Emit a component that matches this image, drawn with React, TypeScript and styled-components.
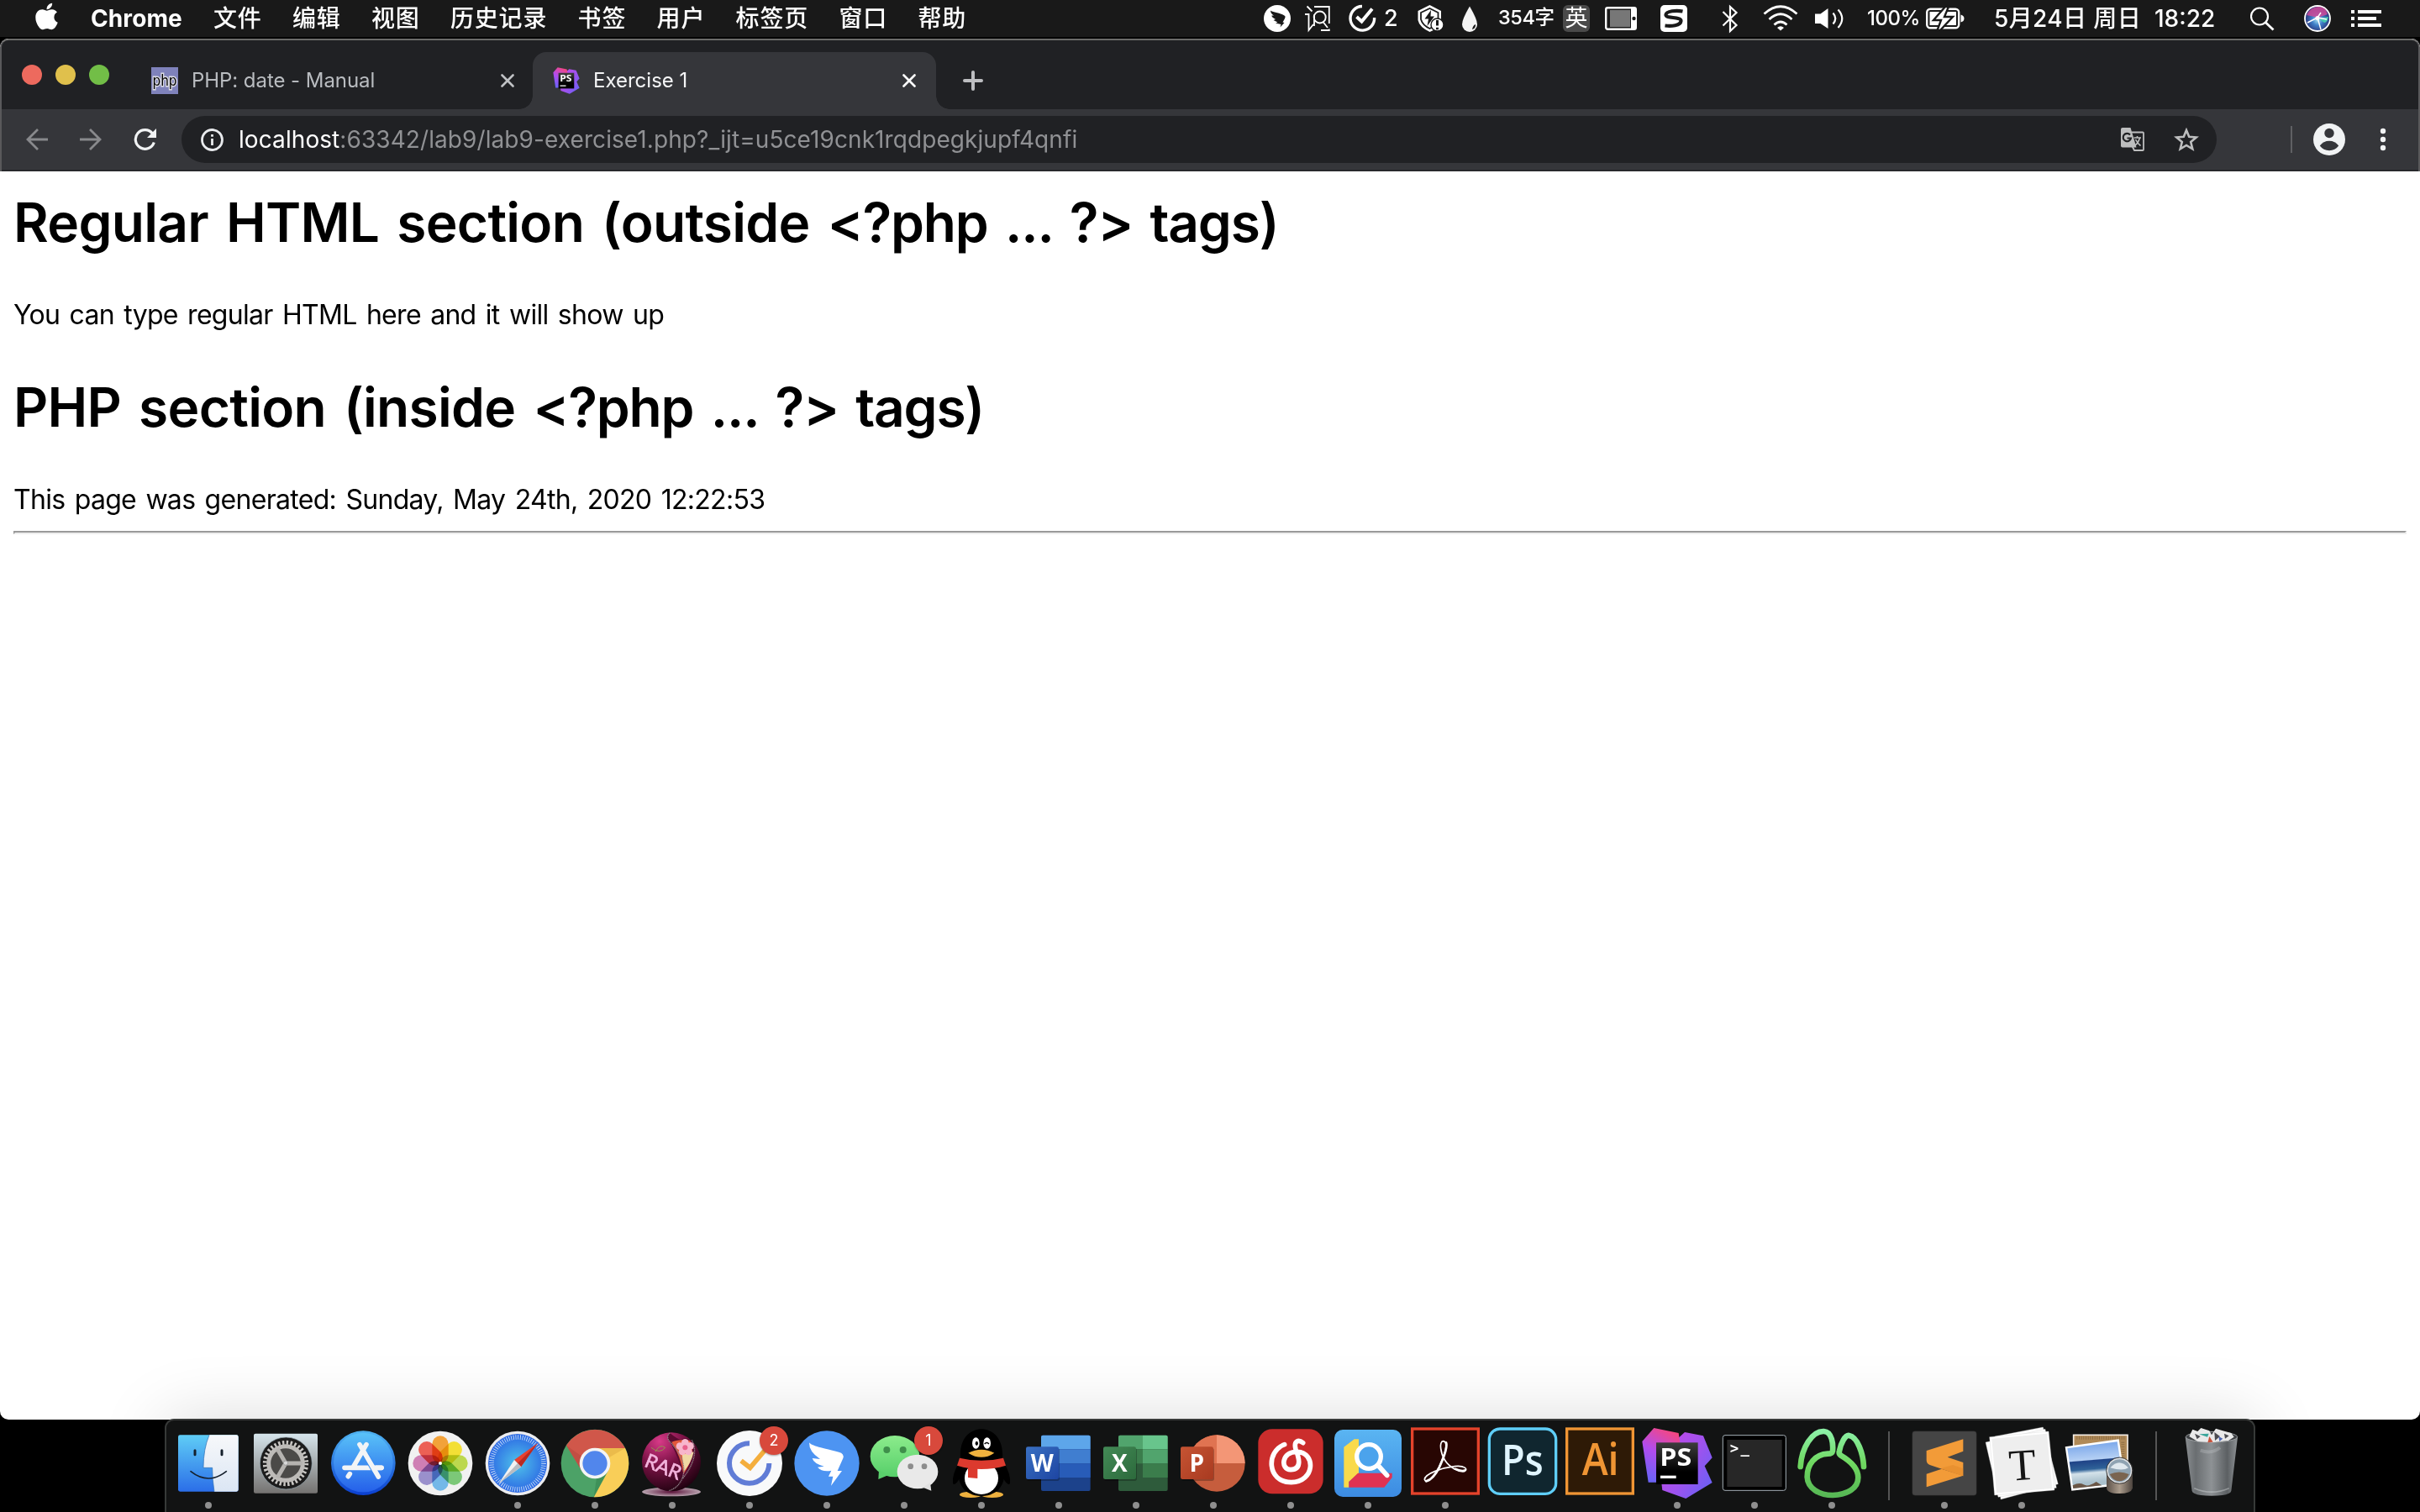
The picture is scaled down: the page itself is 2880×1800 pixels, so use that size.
import React from "react";
import styled, { createGlobalStyle, css } from "styled-components";
import { FaApple } from "react-icons/fa";

const uiFont = `Inter, "Noto Sans CJK SC", sans-serif`;

const GlobalStyle = createGlobalStyle`
  html, body { margin: 0; padding: 0; background: #000; }
  * { box-sizing: border-box; }
  svg { display: block; flex: none; }
`;

/* ---------- layout ---------- */

const Desktop = styled.div`
  display: flex;
  flex-direction: column;
  width: 2880px;
  height: 1800px;
  overflow: hidden;
  background: #000;
  font-family: ${uiFont};
`;

const MenuBar = styled.header`
  display: flex;
  flex: none;
  height: 44px;
  margin-bottom: 2px;
  padding: 0 46px 0 42px;
  background: #191919;
  color: #fff;
`;

const AppleMark = styled.div`
  width: 27px;
  margin-right: 39px;
  padding-top: 1px;
  font-size: 37px;
  svg { width: 27px; }
`;

const AppName = styled.strong`
  width: 146px;
  font-size: 28px;
  font-weight: 700;
  line-height: 44px;
  letter-spacing: 0.1px;
`;

const MenuList = styled.nav`
  display: flex;
  gap: 36.4px;
`;

const MenuItem = styled.span`
  font-size: 28px;
  font-weight: 500;
  line-height: 44px;
  letter-spacing: 0.8px;
  white-space: nowrap;
`;

const StatusArea = styled.div`
  display: flex;
  margin-left: auto;
`;

const StatusSlot = styled.div<{ $w: number; $gap: number }>`
  flex: none;
  width: ${(p) => p.$w}px;
  margin-left: ${(p) => p.$gap}px;
  height: 44px;
`;

const StatusText = styled(StatusSlot)<{ $size: number; $track?: number; $shift?: number }>`
  font-size: ${(p) => p.$size}px;
  font-weight: 500;
  line-height: ${(p) => 44 - (p.$shift ?? 0) * 2}px;
  letter-spacing: ${(p) => p.$track ?? 0}px;
  white-space: nowrap;
`;

const InputBadge = styled(StatusSlot)`
  height: 32px;
  margin-top: 6px;
  border-radius: 6px;
  background: #4a4a4a;
  font-size: 27px;
  line-height: 31px;
  text-align: center;
`;

const Window = styled.section`
  display: flex;
  flex: none;
  flex-direction: column;
  height: 1644px;
  border-radius: 10px;
  overflow: hidden;
  background: #fff;
`;

const BrowserChrome = styled.div`
  flex: none;
  height: 158px;
  border: 2px solid #59595b;
  border-top-color: #6a6a69;
  border-bottom: 0;
  border-radius: 10px 10px 0 0;
  background: #202124;
  overflow: hidden;
`;

const TabStrip = styled.div`
  display: flex;
  align-items: flex-end;
  height: 82px;
  padding-left: 24px;
`;

const TrafficLights = styled.div`
  display: flex;
  align-items: center;
  gap: 16px;
  height: 82px;
  margin-right: 20px;
`;

const Light = styled.span<{ $color: string }>`
  width: 24px;
  height: 24px;
  border-radius: 50%;
  background: ${(p) => p.$color};
`;

const flare = css`
  content: "";
  position: absolute;
  bottom: 0;
  width: 16px;
  height: 16px;
`;

const Tab = styled.div<{ $active?: boolean }>`
  position: relative;
  display: flex;
  align-items: center;
  gap: 16px;
  width: ${(p) => (p.$active ? 480 : 484)}px;
  height: 68px;
  padding: ${(p) => (p.$active ? "0 24px" : "0 22px 0 30px")};
  border-radius: 16px 16px 0 0;
  background: ${(p) => (p.$active ? "#35363a" : "transparent")};
  color: ${(p) => (p.$active ? "#f4f5f6" : "#b9bcc0")};
  ${(p) =>
    p.$active &&
    css`
      &::before {
        ${flare}
        left: -16px;
        background: radial-gradient(circle at 0 0, transparent 15.5px, #35363a 16px);
      }
      &::after {
        ${flare}
        right: -16px;
        background: radial-gradient(circle at 100% 0, transparent 15.5px, #35363a 16px);
      }
    `}
`;

const TabTitle = styled.span<{ $track: number }>`
  flex: 1;
  font-size: 24px;
  line-height: 66px;
  letter-spacing: ${(p) => p.$track}px;
  white-space: nowrap;
`;

const NewTab = styled.div`
  display: flex;
  align-items: center;
  height: 68px;
  margin-left: 32px;
`;

const Toolbar = styled.div`
  display: flex;
  align-items: center;
  height: 74px;
  padding-left: 29px;
  border-bottom: 2px solid #28292c;
  background: #35363a;
`;

const NavButtons = styled.div`
  display: flex;
  gap: 38px;
  margin-right: 30px;
`;

const Omnibox = styled.div`
  display: flex;
  align-items: center;
  width: 2422px;
  height: 56px;
  padding: 0 21px 0 23px;
  border-radius: 28px;
  background: #202124;
`;

const Url = styled.span`
  flex: 1;
  margin-left: 18px;
  color: #909194;
  font-size: 28px;
  line-height: 56px;
  letter-spacing: 0.08px;
  white-space: nowrap;
  b { color: #fff; font-weight: 400; }
`;

const OmniboxActions = styled.div`
  display: flex;
  gap: 35px;
`;

const ToolbarDivider = styled.span`
  width: 2px;
  height: 32px;
  margin: 0 25px 0 88px;
  background: #5f6063;
`;

const MenuDots = styled.div`
  margin-left: 38px;
`;

const Page = styled.main`
  flex: 1;
  padding: 0 16px;
  color: #000;
`;

const Heading = styled.h1`
  margin: 28px 0 0;
  font-size: 64px;
  font-weight: 600;
  line-height: 90px;
  letter-spacing: -0.7px;
  word-spacing: 5.5px;
  white-space: nowrap;
  &:first-child { margin-top: 0; padding-top: 16px; }
`;

const TagName = styled.span`
  letter-spacing: -1.2px;
`;

const Paragraph = styled.p`
  margin: 0;
  padding: 42px 0 14px;
  font-size: 32px;
  line-height: 46px;
  letter-spacing: -0.7px;
  word-spacing: 3px;
  white-space: nowrap;
`;

const Rule = styled.hr`
  margin: 0;
  border: 2px solid;
  border-color: #9a9a9a #eee #eee #9a9a9a;
`;

const Dock = styled.footer`
  position: relative;
  display: flex;
  flex: none;
  width: 2488px;
  height: 111px;
  margin: -1px 0 0 196px;
  padding: 0 4px;
  border: 2px solid #373938;
  border-bottom: 0;
  border-radius: 11px 11px 0 0;
  background: #121313;
  box-shadow: 0 0 80px rgba(0, 0, 0, 0.15);
`;

const DockSlot = styled.div`
  position: relative;
  width: 92px;
  height: 109px;
`;

const RunningDot = styled.span`
  position: absolute;
  left: 42px;
  top: 97px;
  width: 8px;
  height: 8px;
  border-radius: 50%;
  background: #8f8f8f;
`;

const Badge = styled.span`
  position: absolute;
  left: 58px;
  top: 7px;
  width: 34px;
  height: 34px;
  border-radius: 50%;
  background: #d8493c;
  color: #fff;
  font-size: 18px;
  line-height: 34px;
  text-align: center;
  box-shadow: 0 1px 2px rgba(0, 0, 0, 0.35);
`;

const DockDivider = styled.span`
  width: 2px;
  height: 82px;
  margin: 13px 19px 0 21px;
  background: #555;
`;

/* ---------- menu bar ---------- */

const menus = ["文件", "编辑", "视图", "历史记录", "书签", "用户", "标签页", "窗口", "帮助"];

const StatusIcon = ({ w, gap, children }: { w: number; gap: number; children: React.ReactNode }) => (
  <StatusSlot $w={w} $gap={gap}>
    <svg width={w} height={44} viewBox={`0 0 ${w} 44`} fill="none" stroke="none">
      {children}
    </svg>
  </StatusSlot>
);

const StatusItems = () => (
  <StatusArea>
    <StatusIcon w={32} gap={0}>
      <circle cx="16" cy="22" r="16" fill="#fff" />
      <path d="M8 12.500C11 15 22 15.500 25.500 19.500Q26 21 22.500 26.500L24.500 27L19.500 32.500L20.500 29L14 27.500L16.500 26.500L11.500 24L14 23Q9 20.500 9.500 18.500L12 18.500Q8 16 8 12.500Z" fill="#191919" />
    </StatusIcon>
    <StatusIcon w={30} gap={17}>
      <path d="M11 8H28.800V28M28.800 34.500V36H19M0 17H4.500V36L10 29M2.500 7.500L8.500 13.500" stroke="#fff" strokeWidth="1.800" />
      <circle cx="17.700" cy="20.500" r="7" stroke="#fff" strokeWidth="1.900" />
      <path d="M21.500 26L27 33M11 17.500V31" stroke="#fff" strokeWidth="1.800" />
    </StatusIcon>
    <StatusIcon w={33} gap={22}>
      <path d="M16 7.500A14.300 14.300 0 1 0 30.600 21" stroke="#fff" strokeWidth="3.400" />
      <path d="M9.500 20L15.500 25.500L28 10.500" stroke="#fff" strokeWidth="4" />
    </StatusIcon>
    <StatusText $w={14} $gap={9} $size={27}>2</StatusText>
    <StatusIcon w={31} gap={26}>
      <path d="M14.500 6L28 13V24Q25 34 14.500 38Q2 32 0.500 24V13Z" fill="#fff" />
      <path d="M14.500 10L24.500 15V23Q22 31 14.500 34Q6 30 4 23V15Z" fill="none" stroke="#191919" strokeWidth="1.800" />
      <path d="M16 12L8.500 22.500H13L11.500 31L20 19.500H15.500Z" fill="#191919" />
      <circle cx="23.500" cy="29.500" r="7.500" fill="#fff" stroke="#191919" strokeWidth="1.400" />
      <path d="M23.500 24V30.500M23.500 32.800V35.200" stroke="#191919" strokeWidth="3" />
    </StatusIcon>
    <StatusIcon w={18} gap={22}>
      <path d="M9 7.500Q18 23 18 29A9 9 0 0 1 0 29Q0 23 9 7.500Z" fill="#f4f4f4" />
      <path d="M12 35Q16.500 34 16 29Q13 30 12 35Z" fill="#191919" />
    </StatusIcon>
    <StatusText $w={67} $gap={25} $size={23.500} $track={-0.400} $shift={1}>354字</StatusText>
    <InputBadge $w={32} $gap={10}>英</InputBadge>
    <StatusIcon w={38} gap={18}>
      <rect x="1.200" y="9.200" width="35.600" height="25.600" rx="2" stroke="#fff" strokeWidth="2.400" />
      <rect x="31" y="9" width="6" height="26" fill="#fff" />
      <rect x="6" y="12" width="24" height="20" fill="#777" />
      <circle cx="34.500" cy="22" r="2.200" fill="#191919" />
    </StatusIcon>
    <StatusIcon w={32} gap={28}>
      <rect y="6" width="32" height="32" rx="5" fill="#fff" />
      <path d="M26.500 13.500C19 12 7 13 6.500 17.500C6 22.500 25 19.500 24.500 25C24 30.500 13 31.500 5.500 30.500" stroke="#191919" strokeWidth="4.200" />
    </StatusIcon>
    <StatusIcon w={20} gap={41}>
      <path d="M1.500 14L17.500 30L10 37V8L17.500 15L1.500 30.500" stroke="#fff" strokeWidth="2.200" />
    </StatusIcon>
    <StatusIcon w={42} gap={29}>
      <path d="M1.500 16.500Q21 -1 40.500 16.500M7.500 23Q21 10.500 34.500 23M13.500 29.500Q21 22.500 28.500 29.500" stroke="#fff" strokeWidth="2.800" />
      <path d="M17 33Q21 29.500 25 33L21 36.500Z" fill="#fff" />
    </StatusIcon>
    <StatusIcon w={34} gap={20}>
      <path d="M0 16.500H6.500L15.500 10V34L6.500 28H0Z" fill="#fff" />
      <path d="M21.500 15.500Q27 22 21.500 28.500M27.500 11.500Q37 22 27.500 33" stroke="#fff" strokeWidth="2.200" />
    </StatusIcon>
    <StatusText $w={62} $gap={28} $size={24} $track={-0.500}>100%</StatusText>
    <StatusIcon w={46} gap={8}>
      <rect x="1.200" y="10.700" width="38" height="22.600" rx="4" stroke="#fff" strokeWidth="2.400" />
      <rect x="4.500" y="14" width="31.500" height="16" fill="#fff" />
      <path d="M41.500 17.500Q45.500 18.500 45.500 22T41.500 26.500Z" fill="#fff" />
      <path d="M23 8L9 24H18L13.500 36H17L32 20H22L27 8Z" fill="#fff" stroke="#191919" strokeWidth="2.400" />
    </StatusIcon>
    <StatusText $w={173} $gap={35} $size={28} $track={0.400}>5月24日 周日</StatusText>
    <StatusText $w={71} $gap={18} $size={28}>18:22</StatusText>
    <StatusIcon w={29} gap={43}>
      <circle cx="11" cy="19.500" r="10" stroke="#fff" strokeWidth="2.200" />
      <path d="M18 26.500L27.500 35.500" stroke="#fff" strokeWidth="2.800" />
    </StatusIcon>
    <StatusIcon w={32} gap={35}>
      <defs>
        <radialGradient id="siri" cx="0.5" cy="0.55" r="0.55">
          <stop offset="0" stopColor="#a8e6f2" />
          <stop offset="0.4" stopColor="#3f7fc8" />
          <stop offset="1" stopColor="#26266c" />
        </radialGradient>
      </defs>
      <circle cx="16" cy="22" r="15" fill="url(#siri)" stroke="#fff" strokeWidth="1.800" />
      <path d="M3 18Q8 8 17 8T28 17L17 21Z" fill="#d04a98" opacity="0.850" />
      <path d="M17 22L29 20Q28 27 24 27Z" fill="#46c8b0" />
      <path d="M16 21L4 27M16 21L20 35M16 21L27 23M16 21L20 15" stroke="#fff" strokeWidth="1.500" />
      <circle cx="16" cy="21.500" r="2.500" fill="#fff" />
    </StatusIcon>
    <StatusIcon w={36} gap={24}>
      <path d="M0 14H4M0 22H4M0 30H4M8 14H36M8 22H30M8 30H36" stroke="#fff" strokeWidth="4" />
    </StatusIcon>
  </StatusArea>
);

/* ---------- browser icons ---------- */

const CloseIcon = ({ color }: { color: string }) => (
  <svg width="16" height="16" viewBox="0 0 16 16" stroke={color} strokeWidth="2.600" strokeLinecap="round">
    <path d="M1.500 1.500L14.500 14.500M14.500 1.500L1.500 14.500" />
  </svg>
);

const PhpFavicon = () => (
  <svg width="32" height="32" viewBox="0 0 32 32" overflow="visible">
    <rect width="32" height="32" fill="#7f82bb" />
    <text x="16" y="22" textAnchor="middle" textLength="29" lengthAdjust="spacingAndGlyphs" fontFamily="DejaVu Sans" fontWeight="400" fontSize="18" fill="#000" stroke="#dcdce4" strokeWidth="3" paintOrder="stroke">php</text>
  </svg>
);

const StormShape = () => (
  <>
    <defs>
      <linearGradient id="stormA" x1="0.7" y1="0" x2="0.3" y2="1">
        <stop offset="0" stopColor="#f8467c" />
        <stop offset="0.5" stopColor="#b14cf0" />
        <stop offset="1" stopColor="#6a63f6" />
      </linearGradient>
      <linearGradient id="stormB" x1="0.2" y1="0.2" x2="1" y2="0.8">
        <stop offset="0" stopColor="#b84be8" />
        <stop offset="0.45" stopColor="#a052ee" />
        <stop offset="1" stopColor="#6b60f5" />
      </linearGradient>
      <linearGradient id="stormC" x1="0" y1="0" x2="0" y2="1">
        <stop offset="0" stopColor="#3d3d3d" />
        <stop offset="0.7" stopColor="#000" />
      </linearGradient>
    </defs>
    <path d="M1275 135L1341 148L1373 226L1346 256L1373 315L1279 372L1195 342L1190 300L1232 174Z" fill="url(#stormB)" />
    <path d="M1165 120L1253 138L1258 172L1200 240L1173 314H1145L1123 168Z" fill="url(#stormA)" />
    <rect x="1173" y="172" width="149" height="149" fill="url(#stormC)" />
    <text x="1186" y="255" fontFamily="Open Sans" fontWeight="700" fontSize="88" textLength="114" lengthAdjust="spacingAndGlyphs" fill="#fff">PS</text>
    <rect x="1188" y="290" width="56" height="10" fill="#fff" />
  </>
);

/* ---------- dock icons ---------- */

const petals = ["#f2a23a", "#f3df35", "#bcd84e", "#7cc878", "#74b8e8", "#9a90cc", "#cf7fb4", "#ec6055"];

type DockApp = { name: string; x: number; running?: boolean; badge?: string; art: React.ReactNode };

const Tile = ({ x, from, to, letter }: { x: number; from: string; to: string; letter: string }) => (
  <>
    <defs>
      <linearGradient id={`tile${letter}`} x1="0" y1="0" x2="1" y2="1">
        <stop offset="0" stopColor={from} />
        <stop offset="1" stopColor={to} />
      </linearGradient>
    </defs>
    <rect x={x + 3} y="192" width="117" height="117" rx="8" fill="#000" opacity="0.250" />
    <rect x={x} y="187" width="117" height="116" rx="7" fill={`url(#tile${letter})`} />
    <text x={x + 58} y="276" textAnchor="middle" fontFamily="Open Sans" fontWeight="700" fontSize="84" fill="#fff">{letter}</text>
  </>
);

const apps: DockApp[] = [
  {
    name: "finder", x: 204, running: true,
    art: (
      <>
        <defs>
          <linearGradient id="fA" x1="0" y1="0" x2="0" y2="1"><stop offset="0" stopColor="#5fcdf6" /><stop offset="1" stopColor="#2b6ee8" /></linearGradient>
          <linearGradient id="fB" x1="0" y1="0" x2="0" y2="1"><stop offset="0" stopColor="#f7f8fa" /><stop offset="1" stopColor="#dbe6f4" /></linearGradient>
        </defs>
        <rect x="96" y="145" width="215" height="202" rx="7" fill="url(#fA)" />
        <path d="M207 145H304Q311 145 311 152V340Q311 347 304 347H225Q218 305 218 262H186Q186 195 207 145Z" fill="url(#fB)" />
        <path d="M207 145Q186 195 186 262H218Q218 305 225 347" fill="none" stroke="#2a6cb0" strokeWidth="2" />
        <path d="M156 200V215M252 200V215" stroke="#15202c" strokeWidth="9" strokeLinecap="round" />
        <path d="M141 275Q204 325 268 275" fill="none" stroke="#15202c" strokeWidth="5" strokeLinecap="round" />
      </>
    ),
  },
  {
    name: "settings", x: 480,
    art: (
      <>
        <defs>
          <linearGradient id="sA" x1="0" y1="0" x2="0" y2="1"><stop offset="0" stopColor="#d6e5ec" /><stop offset="1" stopColor="#757371" /></linearGradient>
        </defs>
        <rect x="366" y="140" width="228" height="213" rx="6" fill="url(#sA)" />
        <circle cx="481" cy="246" r="93" fill="#1c1c1c" stroke="#9fb0ba" strokeWidth="2" />
        <circle cx="481" cy="246" r="60" fill="#4b4a48" />
        <circle cx="480" cy="246" r="74" fill="none" stroke="#c9c7c4" strokeWidth="15" strokeDasharray="7.270 7.260" />
        <circle cx="480" cy="246" r="61" fill="none" stroke="#bdbbb8" strokeWidth="15" />
        <path d="M480 246H540M480 246L450 194M480 246L450 298" stroke="#b5b3b0" strokeWidth="15" />
        <circle cx="480" cy="245" r="8" fill="#d8d8d8" stroke="#888" strokeWidth="2" />
      </>
    ),
  },
  {
    name: "app-store", x: 756,
    art: (
      <>
        <defs>
          <linearGradient id="aA" x1="0" y1="0" x2="0" y2="1"><stop offset="0" stopColor="#59c2f8" /><stop offset="1" stopColor="#2560ea" /></linearGradient>
          <linearGradient id="aB" x1="0" y1="0" x2="0" y2="1"><stop offset="0" stopColor="#4fb2f0" /><stop offset="1" stopColor="#0b3fd0" /></linearGradient>
        </defs>
        <circle cx="757" cy="245" r="115" fill="url(#aB)" />
        <circle cx="757" cy="243" r="106" fill="url(#aA)" />
        <path d="M768 179L722 258M690 262H822M709 284L703 293" stroke="#f2f4f6" strokeWidth="17" strokeLinecap="round" />
        <path d="M765 215L797 270" stroke="#3a8cf0" strokeWidth="23" />
        <path d="M796 262H822" stroke="#f2f4f6" strokeWidth="17" strokeLinecap="round" />
        <path d="M744 179L811 294" stroke="#f2f4f6" strokeWidth="17" strokeLinecap="round" />
      </>
    ),
  },
  {
    name: "photos", x: 1032,
    art: (
      <>
        <circle cx="1032" cy="246" r="115" fill="#f1f1f1" />
        <g style={{ isolation: "isolate" }}>
          {petals.map((color, i) => (
            <rect key={color} x="1003" y="148" width="58" height="98" rx="29" fill={color} transform={`rotate(${i * 45} 1032 246)`} style={{ mixBlendMode: "multiply" }} />
          ))}
        </g>
        <circle cx="1032" cy="246" r="6" fill="#fff" />
      </>
    ),
  },
  {
    name: "safari", x: 1308, running: true,
    art: (
      <>
        <defs>
          <radialGradient id="safA"><stop offset="0" stopColor="#4fc3ea" /><stop offset="1" stopColor="#2c68e4" /></radialGradient>
        </defs>
        <circle cx="1308" cy="246" r="115" fill="#ececee" />
        <circle cx="1308" cy="246" r="105" fill="url(#safA)" />
        <circle cx="1308" cy="246" r="93" fill="none" stroke="#cfe2fa" strokeWidth="17" strokeDasharray="2.500 5.616" />
        <path d="M1380 174L1296 234L1320 259Z" fill="#e8402f" />
        <path d="M1380 174L1308 246L1320 259Z" fill="#b92a22" />
        <path d="M1241 318L1296 234L1320 259Z" fill="#f2f2f2" />
        <path d="M1241 318L1308 246L1320 259Z" fill="#b8bcc2" />
      </>
    ),
  },
  {
    name: "chrome", x: 144, running: true,
    art: (
      <>
        <circle cx="144" cy="246" r="121" fill="#4ca267" />
        <path d="M42 182A121 121 0 0 1 252 192H144V246L97 273Z" fill="#d0574a" />
        <path d="M252 192A121 121 0 0 1 140 367L191 273L144 246V192Z" fill="#f9ce58" />
        <path d="M42 182L97 273L110 230Z" fill="#b2453b" opacity="0.450" />
        <path d="M252 192H160L195 225Z" fill="#d9a43c" opacity="0.450" />
        <path d="M140 367L191 273L150 298Z" fill="#2f7f4c" opacity="0.500" />
        <circle cx="144" cy="246" r="55" fill="#f4f4f4" />
        <circle cx="144" cy="246" r="44" fill="#5186ec" />
      </>
    ),
  },
  {
    name: "rar", x: 420, running: true,
    art: (
      <>
        <defs>
          <radialGradient id="rA" cx="0.3" cy="0.15" r="0.9"><stop offset="0" stopColor="#d83a88" /><stop offset="0.45" stopColor="#7c1246" /><stop offset="1" stopColor="#200210" /></radialGradient>
          <radialGradient id="rB"><stop offset="0" stopColor="#5a1038" /><stop offset="1" stopColor="#b9a4b0" /></radialGradient>
        </defs>
        <ellipse cx="417" cy="348" rx="105" ry="16" fill="url(#rB)" />
        <circle cx="417" cy="241" r="105" fill="url(#rA)" />
        <path d="M412 138Q398 148 408 165Q430 195 452 262L458 300Q516 225 488 165Q470 150 452 162Q438 160 412 138Z" fill="#5a0a30" />
        <path d="M418 170Q440 158 484 165Q508 215 460 285Q450 220 418 170Z" fill="#e2583c" />
        <path d="M455 215L497 205Q488 245 462 275Z" fill="#f0d9a4" />
        <g fill="#f7b6cc">
          <circle cx="466" cy="172" r="13" /><circle cx="485" cy="184" r="13" /><circle cx="478" cy="204" r="13" />
          <circle cx="456" cy="204" r="13" /><circle cx="447" cy="185" r="13" />
        </g>
        <circle cx="466" cy="190" r="9" fill="#e8608c" />
        <path d="M412 138Q398 148 408 165Q480 240 455 302Q440 335 408 344M490 163Q520 220 458 300" fill="none" stroke="#8d8086" strokeWidth="4" strokeDasharray="4 2" />
        <path d="M345 190Q375 215 395 190Q375 175 360 205" fill="none" stroke="#8fa64a" strokeWidth="2.500" />
        <text x="317" y="256" transform="rotate(22 317 256)" fontFamily="Lato" fontSize="70" fontWeight="400" textLength="134" lengthAdjust="spacingAndGlyphs" fill="#f3b3dc" stroke="#f3b3dc" strokeWidth="2">RAR</text>
      </>
    ),
  },
  {
    name: "ticktick", x: 696, running: true, badge: "2",
    art: (
      <>
        <circle cx="696" cy="246" r="117" fill="#f8f9fa" />
        <path d="M696 175A71 71 0 1 0 766 246" fill="none" stroke="#607cd6" strokeWidth="18" />
        <path d="M666 237L698 262L752 198" fill="none" stroke="#f4ae3d" strokeWidth="17" />
      </>
    ),
  },
  {
    name: "dingtalk", x: 972, running: true,
    art: (
      <>
        <circle cx="972" cy="246" r="116" fill="#4d94f2" />
        <path d="M909 172C918 183 940 188 1015 206Q1035 211 1030 228L1010 273H1026L987 326L994 293H978L988 272Q955 278 939 260L962 257Q925 247 920 228L948 231Q908 205 909 172Z" fill="#fff" />
      </>
    ),
  },
  {
    name: "wechat", x: 1248, running: true, badge: "1",
    art: (
      <>
        <defs>
          <linearGradient id="wA" x1="0" y1="0" x2="0" y2="1"><stop offset="0" stopColor="#8cec8c" /><stop offset="1" stopColor="#57cf6a" /></linearGradient>
        </defs>
        <ellipse cx="1215" cy="221" rx="88" ry="74" fill="url(#wA)" />
        <path d="M1158 270L1156 303L1192 288Z" fill="#5ad06c" />
        <circle cx="1186" cy="198" r="12" fill="#3f8f4b" /><circle cx="1244" cy="198" r="12" fill="#3f8f4b" />
        <ellipse cx="1296" cy="276" rx="73" ry="61" fill="#e9e9e9" />
        <path d="M1315 332L1345 344L1341 315Z" fill="#e2e2e2" />
        <circle cx="1271" cy="257" r="10" fill="#8d8d8d" /><circle cx="1320" cy="257" r="10" fill="#8d8d8d" />
      </>
    ),
  },
  {
    name: "qq", x: 144, running: true,
    art: (
      <>
        <path d="M66 240Q38 285 42 318Q50 328 66 300ZM222 240Q250 285 246 318Q238 328 222 300Z" fill="#000" />
        <ellipse cx="106" cy="358" rx="40" ry="11" fill="#edb03e" /><ellipse cx="182" cy="358" rx="40" ry="11" fill="#edb03e" />
        <path d="M69 225C60 90 228 90 219 225C240 300 220 362 144 363C68 362 48 300 69 225Z" fill="#000" />
        <ellipse cx="144" cy="299" rx="60" ry="58" fill="#fff" />
        <path d="M66 227Q144 246 222 227L231 254Q144 280 57 254Z" fill="#dc3a2e" />
        <path d="M96 258L130 264V300L96 297Z" fill="#dc3a2e" />
        <ellipse cx="124" cy="174" rx="13" ry="20" fill="#fff" /><ellipse cx="164" cy="174" rx="13" ry="20" fill="#fff" />
        <ellipse cx="127" cy="175" rx="5" ry="8" fill="#000" />
        <path d="M155 177Q163 168 171 177" fill="none" stroke="#000" strokeWidth="4" />
        <path d="M97 209Q144 186 190 209Q144 240 97 209Z" fill="#f0b23e" />
      </>
    ),
  },
  {
    name: "word", x: 420, running: true,
    art: (
      <>
        <rect x="357" y="146" width="176" height="199" rx="6" fill="#1c428b" />
        <path d="M357 196V152Q357 146 363 146H527Q533 146 533 152V196Z" fill="#5da6ea" />
        <rect x="357" y="196" width="176" height="51" fill="#407ed0" />
        <rect x="357" y="247" width="176" height="50" fill="#285cb8" />
        <Tile x={303} from="#3a70c2" to="#1d45a2" letter="W" />
      </>
    ),
  },
  {
    name: "excel", x: 696, running: true,
    art: (
      <>
        <rect x="633" y="146" width="176" height="199" rx="6" fill="#2e5b3b" />
        <path d="M633 196V152Q633 146 639 146H720V196Z" fill="#51a46d" />
        <path d="M720 146H803Q809 146 809 152V196H720Z" fill="#68c58c" />
        <rect x="633" y="196" width="87" height="51" fill="#3b7d4c" />
        <rect x="720" y="196" width="89" height="51" fill="#51a46d" />
        <rect x="720" y="247" width="89" height="50" fill="#3b7d4c" />
        <Tile x={579} from="#438a56" to="#2c6a3c" letter="X" />
      </>
    ),
  },
  {
    name: "powerpoint", x: 972, running: true,
    art: (
      <>
        <circle cx="984" cy="246" r="101" fill="#c65d3d" />
        <path d="M984 246H883A101 101 0 0 1 984 145Z" fill="#e07351" />
        <path d="M984 246V145A101 101 0 0 1 1085 246Z" fill="#f39676" />
        <Tile x={855} from="#c65433" to="#a83a20" letter="P" />
      </>
    ),
  },
  {
    name: "netease-music", x: 1248, running: true,
    art: (
      <>
        <rect x="1132" y="124" width="232" height="231" rx="50" fill="#cb2d2c" />
        <path d="M1226 179C1160 202 1162 314 1250 314C1336 312 1338 208 1272 205C1215 203 1210 268 1248 269C1292 268 1276 222 1266 196C1258 166 1276 160 1292 173" fill="none" stroke="#fff" strokeWidth="17" strokeLinecap="round" strokeLinejoin="round" />
      </>
    ),
  },
  {
    name: "finder-search", x: 144, running: true,
    art: (
      <>
        <defs>
          <linearGradient id="lA" x1="0" y1="0" x2="0" y2="1"><stop offset="0" stopColor="#5ab5f2" /><stop offset="1" stopColor="#3c8be2" /></linearGradient>
        </defs>
        <rect x="24" y="126" width="240" height="240" rx="30" fill="url(#lA)" />
        <path d="M58 188L95 160H111V282L76 312V332H58Z" fill="#f9da4b" />
        <path d="M76 312L108 281H230V297L202 332H76Z" fill="#e03253" />
        <path d="M184 258L212 289" stroke="#fff" strokeWidth="17" strokeLinecap="round" />
        <circle cx="147" cy="222" r="43" fill="#4ba3ec" stroke="#fff" strokeWidth="16" />
      </>
    ),
  },
  {
    name: "acrobat", x: 420, running: true,
    art: (
      <>
        <rect x="302" y="123" width="236" height="231" fill="#280603" stroke="#e4432b" strokeWidth="10" />
        <path d="M413 167C396 168 404 212 418 234C436 262 468 278 488 275C504 268 488 252 452 257C408 262 346 284 346 304C352 324 384 288 398 258C416 218 434 170 413 167Z" fill="none" stroke="#fff" strokeWidth="5" />
        <path d="M423 172C430 190 412 232 398 262C386 286 368 306 352 310" fill="none" stroke="#fff" strokeWidth="8" strokeLinecap="round" />
        <path d="M455 266Q480 277 492 270" fill="none" stroke="#fff" strokeWidth="7" strokeLinecap="round" />
      </>
    ),
  },
  {
    name: "photoshop", x: 696,
    art: (
      <>
        <rect x="577" y="123" width="238" height="232" rx="38" fill="#10262f" stroke="#5fcef7" strokeWidth="10" />
        <text x="621" y="289" fontFamily="Open Sans" fontWeight="600" fontSize="154" textLength="149" lengthAdjust="spacingAndGlyphs" fill="#e0f5ff">Ps</text>
      </>
    ),
  },
  {
    name: "illustrator", x: 972,
    art: (
      <>
        <rect x="854" y="123" width="236" height="231" fill="#2e1a06" stroke="#ef9534" strokeWidth="10" />
        <text x="908" y="287" fontFamily="Open Sans" fontWeight="600" fontSize="156" textLength="132" lengthAdjust="spacingAndGlyphs" fill="#ef9534">Ai</text>
      </>
    ),
  },
  { name: "phpstorm", x: 1248, running: true, art: <StormShape /> },
  {
    name: "terminal", x: 0, running: true,
    art: (
      <>
        <rect x="-113" y="146" width="225" height="197" rx="8" fill="#000" stroke="#a4afb6" strokeWidth="3" />
        <rect x="-98" y="162" width="196" height="168" fill="#272727" />
        <text x="-88" y="209" fontFamily="DejaVu Sans Mono" fontWeight="700" fontSize="52" textLength="70" fill="#fff">&gt;_</text>
      </>
    ),
  },
  {
    name: "navicat", x: 0, running: true,
    art: (
      <>
        <defs>
          <linearGradient id="nA" x1="0" y1="0" x2="0" y2="1"><stop offset="0" stopColor="#8cf0a6" /><stop offset="0.5" stopColor="#6fd860" /><stop offset="1" stopColor="#57b855" /></linearGradient>
        </defs>
        <path d="M-112 258C-108 190 -70 130 -28 132C2 134 5 180 3 202Q1 212 -14 212C-60 214 -88 250 -88 295C-86 335 -45 360 3 360C56 358 94 335 94 297C94 265 66 238 32 218Q24 212 27 202C32 175 48 144 62 147C92 152 112 212 114 258" fill="none" stroke="url(#nA)" strokeWidth="20" strokeLinecap="round" strokeLinejoin="round" />
      </>
    ),
  },
];

const files: DockApp[] = [
  {
    name: "sublime", x: 0, running: true,
    art: (
      <>
        <rect x="-114" y="132" width="228" height="228" rx="8" fill="#454545" stroke="#3a3a3a" strokeWidth="2" />
        <path d="M67 290L-64 331V284L-10 266Z" fill="#f29b38" />
        <path d="M67 160L-64 201V234Q-64 248 -52 252L67 292V243L11 224L67 203Z" fill="#f29b38" />
        <path d="M67 292L-14 265L30 252L67 265Z" fill="#d97f22" opacity="0.350" />
      </>
    ),
  },
  {
    name: "typora", x: 0, running: true,
    art: (
      <>
        <path d="M-96 150L76 117L130 320L-75 375Z" fill="#fff" stroke="#bbb" strokeWidth="1" />
        <path d="M-129 171L84 124L124 334L-84 367Z" fill="#fff" stroke="#bbb" strokeWidth="1" />
        <path d="M-115 152L96 132L117 342L-97 360Z" fill="#fff" stroke="#ccc" strokeWidth="1" />
        <path d="M-107 158L90 140L109 336L-90 352Z" fill="#eee" />
        <text x="2" y="305" textAnchor="middle" fontFamily="Liberation Serif" fontSize="158" fill="#151515" transform="rotate(-4 2 250)">T</text>
      </>
    ),
  },
  {
    name: "preview", x: 0,
    art: (
      <>
        <defs>
          <linearGradient id="pA" x1="0" y1="0" x2="0.1" y2="1">
            <stop offset="0" stopColor="#6f9fe8" /><stop offset="0.42" stopColor="#b5d0f4" /><stop offset="0.44" stopColor="#1f4387" />
            <stop offset="0.62" stopColor="#2f6298" /><stop offset="0.7" stopColor="#d4e2ea" /><stop offset="0.9" stopColor="#a9c0cc" />
          </linearGradient>
          <linearGradient id="pB" x1="0" y1="0" x2="1" y2="0"><stop offset="0" stopColor="#5b5048" /><stop offset="0.5" stopColor="#ab9c8c" /><stop offset="1" stopColor="#4c443e" /></linearGradient>
        </defs>
        <rect x="-91" y="145" width="193" height="120" fill="#b08a58" stroke="#f3ece4" strokeWidth="5" />
        <path d="M-80 155H95M85 170V240" stroke="#6e5230" strokeWidth="12" strokeDasharray="3 5" opacity="0.500" />
        <path d="M-121 187L71 160L96 322L-98 344Z" fill="#fff" />
        <path d="M-113 193L65 169L88 315L-92 336Z" fill="url(#pA)" />
        <path d="M-94 325Q-70 312 -55 322T-10 312L10 325L-92 336ZM30 285L60 270L84 290L88 315L50 312Z" fill="#6a5646" />
        <path d="M27 280V335Q30 354 72 354T120 335V280Z" fill="url(#pB)" />
        <circle cx="73" cy="272" r="43" fill="#8fa3b2" stroke="#e0e2e4" strokeWidth="5" />
        <circle cx="73" cy="272" r="47" fill="none" stroke="#3c3c3c" strokeWidth="3" />
        <path d="M40 262Q72 225 105 262Q85 275 40 262Z" fill="#dfe8ee" />
        <path d="M38 285Q72 270 107 285Q95 310 73 310T38 285Z" fill="#7a6450" />
      </>
    ),
  },
];

const trash: DockApp = {
  name: "trash", x: 0,
  art: (
    <>
      <defs>
        <linearGradient id="tA" x1="0" y1="0" x2="1" y2="0">
          <stop offset="0" stopColor="#8b8f92" /><stop offset="0.2" stopColor="#6a6e71" /><stop offset="0.5" stopColor="#8e9295" />
          <stop offset="0.8" stopColor="#5c6063" /><stop offset="1" stopColor="#909497" />
        </linearGradient>
      </defs>
      <path d="M-94 152L-70 345Q-66 362 0 362T70 345L93 152Q0 190 -94 152Z" fill="url(#tA)" />
      <ellipse cx="0" cy="152" rx="92" ry="19" fill="#3e4144" stroke="#9a9ea1" strokeWidth="3" />
      <path d="M-80 150L-68 125L-50 132L-38 120L-8 130L0 145L15 122L40 130L70 138L80 152L60 165L0 172L-50 168Z" fill="#e9e9e9" />
      <path d="M-60 140L-40 150L-52 160ZM10 135L30 150L12 165ZM45 140L62 148L48 158Z" fill="#4b4b50" />
      <path d="M-45 142L-10 140L-15 152Z" fill="#3aa59a" />
      <path d="M-8 150L5 170L-14 172Z" fill="#c9523c" />
      <path d="M25 150L40 158L28 168Z" fill="#4a63b0" />
      <path d="M-40 200Q0 215 30 190" fill="none" stroke="#c6cacd" strokeWidth="12" opacity="0.300" />
      <path d="M-62 335Q0 362 62 335" fill="none" stroke="#d0d4d6" strokeWidth="5" opacity="0.450" />
    </>
  ),
};

const DockItem = ({ app }: { app: DockApp }) => (
  <DockSlot>
    <svg width="92" height="109" viewBox={`${app.x - 138} 93 276 327`} overflow="visible">
      {app.art}
    </svg>
    {app.badge && <Badge>{app.badge}</Badge>}
    {app.running && <RunningDot />}
  </DockSlot>
);

/* ---------- app ---------- */

export default function App() {
  return (
    <Desktop>
      <GlobalStyle />
      <MenuBar>
        <AppleMark><FaApple /></AppleMark>
        <AppName>Chrome</AppName>
        <MenuList>
          {menus.map((m) => (
            <MenuItem key={m}>{m}</MenuItem>
          ))}
        </MenuList>
        <StatusItems />
      </MenuBar>

      <Window>
        <BrowserChrome>
          <TabStrip>
            <TrafficLights>
              <Light $color="#ed6a5e" />
              <Light $color="#e0c04c" />
              <Light $color="#72be47" />
            </TrafficLights>
            <Tab>
              <PhpFavicon />
              <TabTitle $track={-0.06}>PHP: date - Manual</TabTitle>
              <CloseIcon color="#c0c2c5" />
            </Tab>
            <Tab $active>
              <svg width="32" height="32" viewBox="1120 118 256 256"><StormShape /></svg>
              <TabTitle $track={0}>Exercise 1</TabTitle>
              <CloseIcon color="#fff" />
            </Tab>
            <NewTab>
              <svg width="24" height="24" viewBox="0 0 24 24" stroke="#bdbec1" strokeWidth="4" strokeLinecap="round">
                <path d="M12 2V22M2 12H22" />
              </svg>
            </NewTab>
          </TabStrip>
          <Toolbar>
            <NavButtons>
              <svg width="26" height="26" viewBox="0 0 26 26" fill="none" stroke="#88898c" strokeWidth="2.800">
                <path d="M26 13H2M14 1L2 13L14 25" />
              </svg>
              <svg width="26" height="26" viewBox="0 0 26 26" fill="none" stroke="#88898c" strokeWidth="2.800">
                <path d="M0 13H24M12 1L24 13L12 25" />
              </svg>
              <svg width="27" height="26" viewBox="0 0 27 26" fill="none" stroke="#f1f3f4" strokeWidth="3.200">
                <path d="M22.500 6A11.300 11.300 0 1 0 24.300 16.500" />
                <path d="M27 0V11H16Z" fill="#f1f3f4" stroke="none" />
              </svg>
            </NavButtons>
            <Omnibox>
              <svg width="27" height="27" viewBox="0 0 27 27" fill="none" stroke="#e8eaed" strokeWidth="2.800">
                <circle cx="13.500" cy="13.500" r="12" />
                <path d="M13.500 12V20M13.500 7V9.800" />
              </svg>
              <Url><b>localhost</b>:63342/lab9/lab9-exercise1.php?_ijt=u5ce19cnk1rqdpegkjupf4qnfi</Url>
              <OmniboxActions>
                <svg width="28" height="28" viewBox="0 0 28 28">
                  <path d="M13 5.500H26Q27 5.500 27 6.500V26Q27 27 26 27H16L13.500 22" fill="none" stroke="#bdbebf" strokeWidth="1.800" />
                  <path d="M2 0H11.500L18.500 23.500H2Q0 23.500 0 21.500V2Q0 0 2 0Z" fill="#bdbebf" />
                  <path d="M11 8.500A4.700 4.700 0 1 0 12 12.500H7.500" fill="none" stroke="#202124" strokeWidth="2.200" />
                  <path d="M15.500 12H24M19.500 10V12M22.500 12Q21 18 16.500 21.500M17.500 14Q20 19 23.500 21.500" fill="none" stroke="#bdbebf" strokeWidth="1.600" />
                </svg>
                <svg width="30" height="28" viewBox="0 0 30 28" fill="none" stroke="#bdbebf" strokeWidth="2.600">
                  <path d="M15 3L18.200 10.800L26.800 11.500L20.200 17L22.300 25.300L15 20.900L7.700 25.300L9.800 17L3.200 11.500L11.800 10.800Z" />
                </svg>
              </OmniboxActions>
            </Omnibox>
            <ToolbarDivider />
            <svg width="38" height="38" viewBox="0 0 38 38">
              <circle cx="19" cy="19" r="19" fill="#f1f3f4" />
              <circle cx="19" cy="11.500" r="5.700" fill="#35363a" />
              <path d="M7.800 26.500Q12 20.800 19 20.800T30.200 26.500Q26 32.200 19 32.200T7.800 26.500Z" fill="#35363a" />
            </svg>
            <MenuDots>
              <svg width="14" height="28" viewBox="0 0 14 28" fill="#f1f3f4">
                <circle cx="7" cy="4" r="3.200" /><circle cx="7" cy="14" r="3.200" /><circle cx="7" cy="24" r="3.200" />
              </svg>
            </MenuDots>
          </Toolbar>
        </BrowserChrome>
        <Page>
          <Heading>Regular HTML section (outside <TagName>&lt;?php ... ?&gt; tags)</TagName></Heading>
          <Paragraph>You can type regular HTML here and it will show up</Paragraph>
          <Heading>PHP section (inside <TagName>&lt;?php ... ?&gt; tags)</TagName></Heading>
          <Paragraph>This page was generated: Sunday, May 24th, 2020 12:22:53</Paragraph>
          <Rule />
        </Page>
      </Window>

      <Dock>
        {apps.map((a) => (
          <DockItem key={a.name} app={a} />
        ))}
        <DockDivider />
        {files.map((a) => (
          <DockItem key={a.name} app={a} />
        ))}
        <DockDivider />
        <DockItem app={trash} />
      </Dock>
    </Desktop>
  );
}
